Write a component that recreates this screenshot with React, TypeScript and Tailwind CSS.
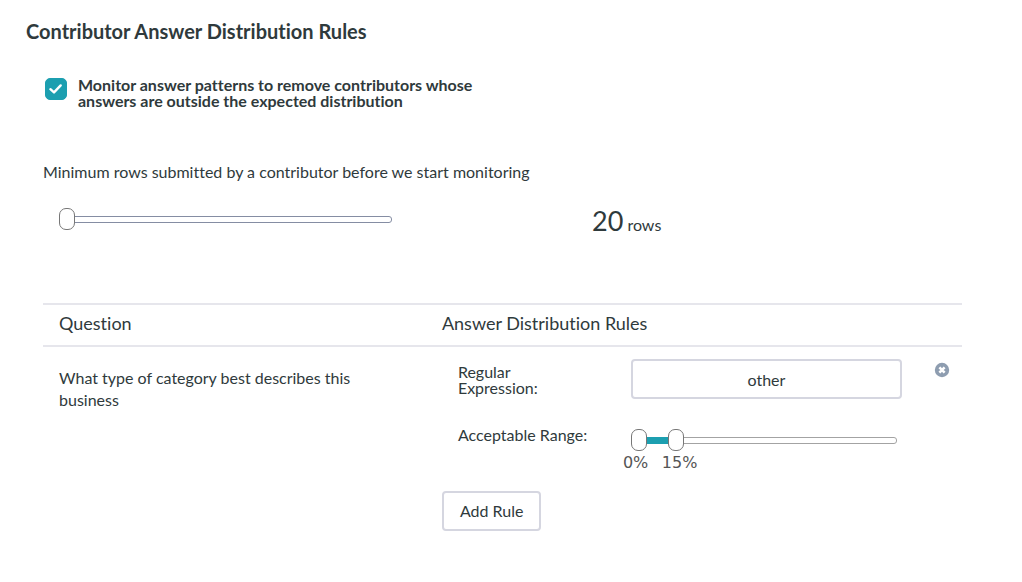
import { useState } from "react";

const thumb =
  "[&::-webkit-slider-thumb]:pointer-events-auto [&::-webkit-slider-thumb]:box-border [&::-webkit-slider-thumb]:h-[22px] [&::-webkit-slider-thumb]:w-4 [&::-webkit-slider-thumb]:appearance-none [&::-webkit-slider-thumb]:rounded-[7px] [&::-webkit-slider-thumb]:border [&::-webkit-slider-thumb]:border-solid [&::-webkit-slider-thumb]:border-[#777777] [&::-webkit-slider-thumb]:bg-white";

const rangeInput =
  "pointer-events-none absolute inset-0 m-0 h-[22px] w-full appearance-none bg-transparent " + thumb;

function MinimumRows() {
  const [rows, setRows] = useState(20);
  return (
    <section className="pt-[51px]">
      <label htmlFor="min-rows" className="block leading-6">
        Minimum rows submitted by a contributor before we start monitoring
      </label>
      <div className="mt-5 flex items-start pl-4">
        <div className="relative mt-1 flex h-[22px] w-[333px] items-center">
          <div className="h-[7px] w-full rounded-[3px] border border-[#858da3] bg-white" />
          <input
            id="min-rows"
            type="range"
            min={20}
            max={200}
            value={rows}
            onChange={(e) => setRows(Number(e.target.value))}
            className={rangeInput}
          />
        </div>
        <output htmlFor="min-rows" className="ml-[200px] leading-[34px]">
          <span className="text-[27px]">{rows}</span> rows
        </output>
      </div>
    </section>
  );
}

function AcceptableRange() {
  const [low, setLow] = useState(0);
  const [high, setHigh] = useState(15);
  const span = `(100% - 16px) * ${(high - low) / 100}`;
  return (
    <div className="w-[266px] pt-0.5">
      <div className="relative flex h-[22px] items-center">
        <div className="h-[7px] w-full rounded-[3px] border border-[#a3a3a3] bg-white" />
        <div
          className="absolute top-2 h-[7px] bg-[#1c9fb0]"
          style={{ left: `calc(8px + (100% - 16px) * ${low / 100})`, width: `calc(${span})` }}
        />
        <input
          aria-label="Lowest acceptable percentage"
          type="range"
          value={low}
          onChange={(e) => setLow(Math.min(Number(e.target.value), high))}
          className={rangeInput}
        />
        <input
          aria-label="Highest acceptable percentage"
          type="range"
          value={high}
          onChange={(e) => setHigh(Math.max(Number(e.target.value), low))}
          className={rangeInput}
        />
      </div>
      <div
        className="flex justify-between font-['DejaVu_Sans',sans-serif] leading-6 text-[#555555]"
        style={{
          marginLeft: `calc((100% - 16px) * ${low / 100} - 8px)`,
          width: `calc(${span} + 37px)`,
        }}
      >
        <span>{low}%</span>
        <span>{high}%</span>
      </div>
    </div>
  );
}

export default function App() {
  const [monitor, setMonitor] = useState(true);
  const [expression, setExpression] = useState("other");
  return (
    <main className="bg-white pt-[15px] pr-[60px] pb-12 pl-[26px] font-['Lato',sans-serif] text-[16px] text-[#2f3a3c] [font-variant-ligatures:none]">
      <h1 className="text-[20px] leading-8 font-bold">Contributor Answer Distribution Rules</h1>

      <div className="pl-[17px]">
        <label className="flex items-start gap-[11px] pt-[30px] pl-[2px]">
          <span className="relative mt-px size-[22px] shrink-0">
            <input
              type="checkbox"
              checked={monitor}
              onChange={(e) => setMonitor(e.target.checked)}
              className="peer block size-[22px] appearance-none rounded-[5px] border border-[#1c9fb0] bg-white checked:bg-[#1c9fb0]"
            />
            <svg
              viewBox="0 0 22 22"
              aria-hidden="true"
              className="pointer-events-none absolute inset-0 hidden size-[22px] peer-checked:block"
            >
              <path
                d="M5.4 11.2 9 14.4 15.7 7.4"
                fill="none"
                stroke="#fff"
                strokeWidth="2.4"
                strokeLinecap="round"
                strokeLinejoin="round"
              />
            </svg>
          </span>
          <span className="max-w-[430px] leading-4 font-bold">
            Monitor answer patterns to remove contributors whose
            <br />
            answers are outside the expected distribution
          </span>
        </label>

        <MinimumRows />

        <table className="mt-[61px] w-full table-fixed border-collapse text-left">
          <thead>
            <tr className="border-t-2 border-b-2 border-[#e6e6ec] text-[18px] leading-6">
              <th className="w-5/12 px-4 pt-1.5 pb-2.5 font-normal">Question</th>
              <th className="px-4 pt-1.5 pb-2.5 font-normal">Answer Distribution Rules</th>
            </tr>
          </thead>
          <tbody>
            <tr className="align-top">
              <td className="py-5 pr-14 pl-4 leading-[22px]">
                What type of category best describes this business
              </td>
              <td className="pt-3 pl-4">
                <div className="flex items-start pl-4">
                  <label htmlFor="expression" className="w-[173px] pt-[5px] leading-4">
                    Regular
                    <br />
                    Expression:
                  </label>
                  <input
                    id="expression"
                    type="text"
                    value={expression}
                    onChange={(e) => setExpression(e.target.value)}
                    className="h-10 w-[271px] rounded-[4px] border-2 border-[#d5d6e0] bg-white text-center"
                  />
                  <button type="button" aria-label="Remove rule" className="mt-[3px] mr-3 ml-auto">
                    <svg viewBox="0 0 16 16" className="block size-4" aria-hidden="true">
                      <circle cx="8" cy="8" r="7.2" fill="#8e9db0" />
                      <path d="M5.4 5.4 10.6 10.6M10.6 5.4 5.4 10.6" stroke="#fff" strokeWidth="2.6" />
                    </svg>
                  </button>
                </div>
                <div className="flex items-start pt-7 pl-4">
                  <span className="w-[173px] leading-4">Acceptable Range:</span>
                  <AcceptableRange />
                </div>
                <button
                  type="button"
                  className="mt-4 h-10 rounded-[4px] border-2 border-[#d5d6e0] bg-white px-4"
                >
                  Add Rule
                </button>
              </td>
            </tr>
          </tbody>
        </table>
      </div>
    </main>
  );
}
